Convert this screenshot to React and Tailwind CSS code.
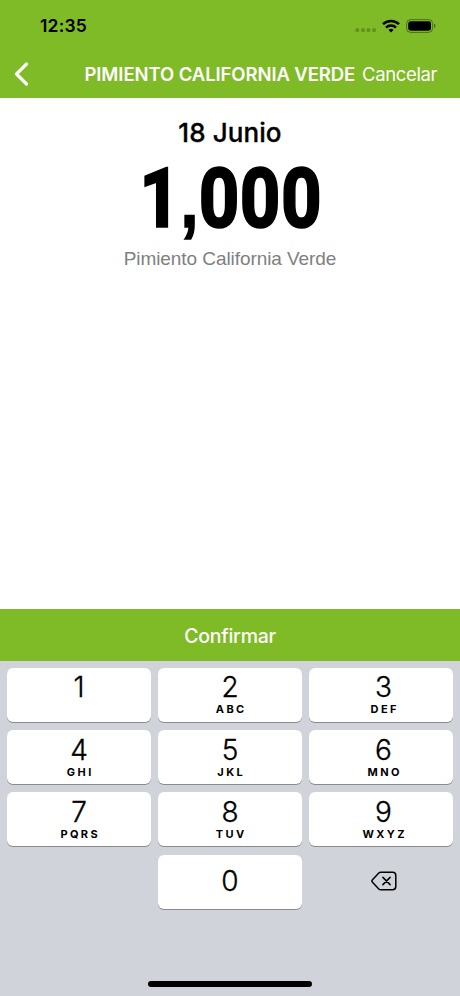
// App.jsx
import React from 'react';

const keys = [
  { digit: '1', letters: '' },
  { digit: '2', letters: 'ABC' },
  { digit: '3', letters: 'DEF' },
  { digit: '4', letters: 'GHI' },
  { digit: '5', letters: 'JKL' },
  { digit: '6', letters: 'MNO' },
  { digit: '7', letters: 'PQRS' },
  { digit: '8', letters: 'TUV' },
  { digit: '9', letters: 'WXYZ' },
];

const StatusBar = () => (
  <div className="flex h-[51px] items-center justify-between pl-10 pr-6">
    <span className="text-[17.5px] leading-5 font-semibold tracking-[0.2px] text-black">12:35</span>
    <div className="flex items-center">
      <svg width="22" height="16" viewBox="0 0 22 16" fill="#000" fillOpacity="0.22" className="mr-[5px]">
        <rect x="0.5" y="10.2" width="3.6" height="3.8" rx="1" />
        <rect x="6.1" y="10.2" width="3.6" height="3.8" rx="1" />
        <rect x="11.7" y="10.2" width="3.6" height="3.8" rx="1" />
        <rect x="17.3" y="10.2" width="3.6" height="3.8" rx="1" />
      </svg>
      <svg width="18" height="14" viewBox="0 0 18 14" fill="none" stroke="#000" strokeWidth="2.5" className="mr-[6px]">
        <path d="M1 5.2a11.5 11.5 0 0 1 16 0" />
        <path d="M4 8.6a7.2 7.2 0 0 1 10 0" />
        <path d="M9 13.6l2.5-2.6a3.7 3.7 0 0 0-5 0z" fill="#000" stroke="none" />
      </svg>
      <svg width="30" height="14" viewBox="0 0 30 14">
        <rect x="0.6" y="0.6" width="26" height="12.8" rx="4" fill="none" stroke="#000" strokeOpacity="0.4" />
        <rect x="2.2" y="2.3" width="22.8" height="9.4" rx="2.4" fill="#000" />
        <path d="M28 4.8v4.4a2.4 2.4 0 0 0 0-4.4z" fill="#000" fillOpacity="0.45" />
      </svg>
    </div>
  </div>
);

const Header = () => (
  <header className="h-[98px] bg-[#7fba27]">
    <StatusBar />
    <div className="flex h-[46px] items-center whitespace-nowrap pl-[14px] text-white">
      <svg width="16" height="24" viewBox="0 0 16 24" fill="none" stroke="#fff" strokeWidth="3.2" strokeLinecap="round" strokeLinejoin="round">
        <path d="M12.5 2L2.5 12l10 10" />
      </svg>
      <h1 className="ml-[54.5px] w-[277.5px] pt-px text-[18.5px] font-semibold tracking-[-0.09px]">PIMIENTO CALIFORNIA VERDE</h1>
      <button className="pt-px text-[18.5px] tracking-[-0.35px]">Cancelar</button>
    </div>
  </header>
);

const Key = ({ digit, letters }) => (
  <button className="flex h-[54px] flex-col items-center rounded-[6px] bg-white text-black shadow-[0_1px_0_#898b8f] nth-[3n]:pl-[5px]">
    <span className="mt-[4.4px] text-[28px] leading-[30px] font-light [-webkit-text-stroke:0.35px_#000]">{digit}</span>
    <span className="pl-[2.5px] text-[11px] leading-[15px] font-bold tracking-[2.4px]">{letters}</span>
  </button>
);

const Keypad = () => (
  <div className="flex flex-1 flex-col bg-[#d0d3da] pt-[7px]">
    <div className="grid grid-cols-3 gap-x-[7px] gap-y-[8.2px] px-[7px]">
      {keys.map((key) => (
        <Key key={key.digit} digit={key.digit} letters={key.letters} />
      ))}
      <div />
      <button className="flex h-[54px] items-center justify-center rounded-[6px] bg-white pb-px text-[28px] font-light text-black shadow-[0_1px_0_#898b8f] [-webkit-text-stroke:0.35px_#000]">
        0
      </button>
      <button className="flex h-[54px] items-center justify-center pb-[2px] pl-[6px]">
        <svg width="26" height="20" viewBox="0 0 26 20" fill="none" stroke="#000" strokeWidth="1.5" strokeLinecap="round" strokeLinejoin="round">
          <path d="M9.8 1.2h11.8a3.2 3.2 0 0 1 3.2 3.2v11.2a3.2 3.2 0 0 1-3.2 3.2H9.8a2.8 2.8 0 0 1-2-.8L1.5 11.2a1.7 1.7 0 0 1 0-2.4L7.8 2a2.8 2.8 0 0 1 2-.8z" />
          <path d="M11.9 6.4l7.2 7.2M19.1 6.4l-7.2 7.2" />
        </svg>
      </button>
    </div>
    <div className="mx-auto mt-auto mb-[9px] h-[6px] w-[164px] rounded-full bg-black" />
  </div>
);

const App = () => {
  return (
    <div className="flex h-[996px] w-[460px] flex-col overflow-hidden bg-white font-['Inter',sans-serif]">
      <Header />

      {/* Quantity */}
      <main className="flex h-[511px] flex-col items-center whitespace-nowrap">
        <h2 className="mt-[19px] text-[26px] leading-8 font-medium tracking-[0.1px] text-black [-webkit-text-stroke:0.3px_#000]">18 Junio</h2>
        <div className="mt-[8px] flex h-[81px] w-[184px] items-center justify-end">
          <span className="origin-right scale-x-[0.85] pt-[2px] font-['Roboto',sans-serif] text-[83px] leading-[81px] font-extrabold tracking-[0.5px] text-black [-webkit-text-stroke:1.6px_#000]">
            1<span className="font-['Liberation_Sans',sans-serif] text-[76px] leading-none font-bold">,</span>000
          </span>
          <span className="h-[81px] w-[2px] bg-[#4a72e0]" />
        </div>
        <p className="mt-[9px] font-['Liberation_Sans',sans-serif] text-[19px] leading-6 tracking-[-0.07px] text-[#808080]">Pimiento California Verde</p>
      </main>

      <button className="h-[52px] bg-[#7fba27] pt-[3px] text-[19.5px] font-medium tracking-[-0.25px] text-white">
        Confirmar
      </button>
      <Keypad />
    </div>
  );
};

export default App;
